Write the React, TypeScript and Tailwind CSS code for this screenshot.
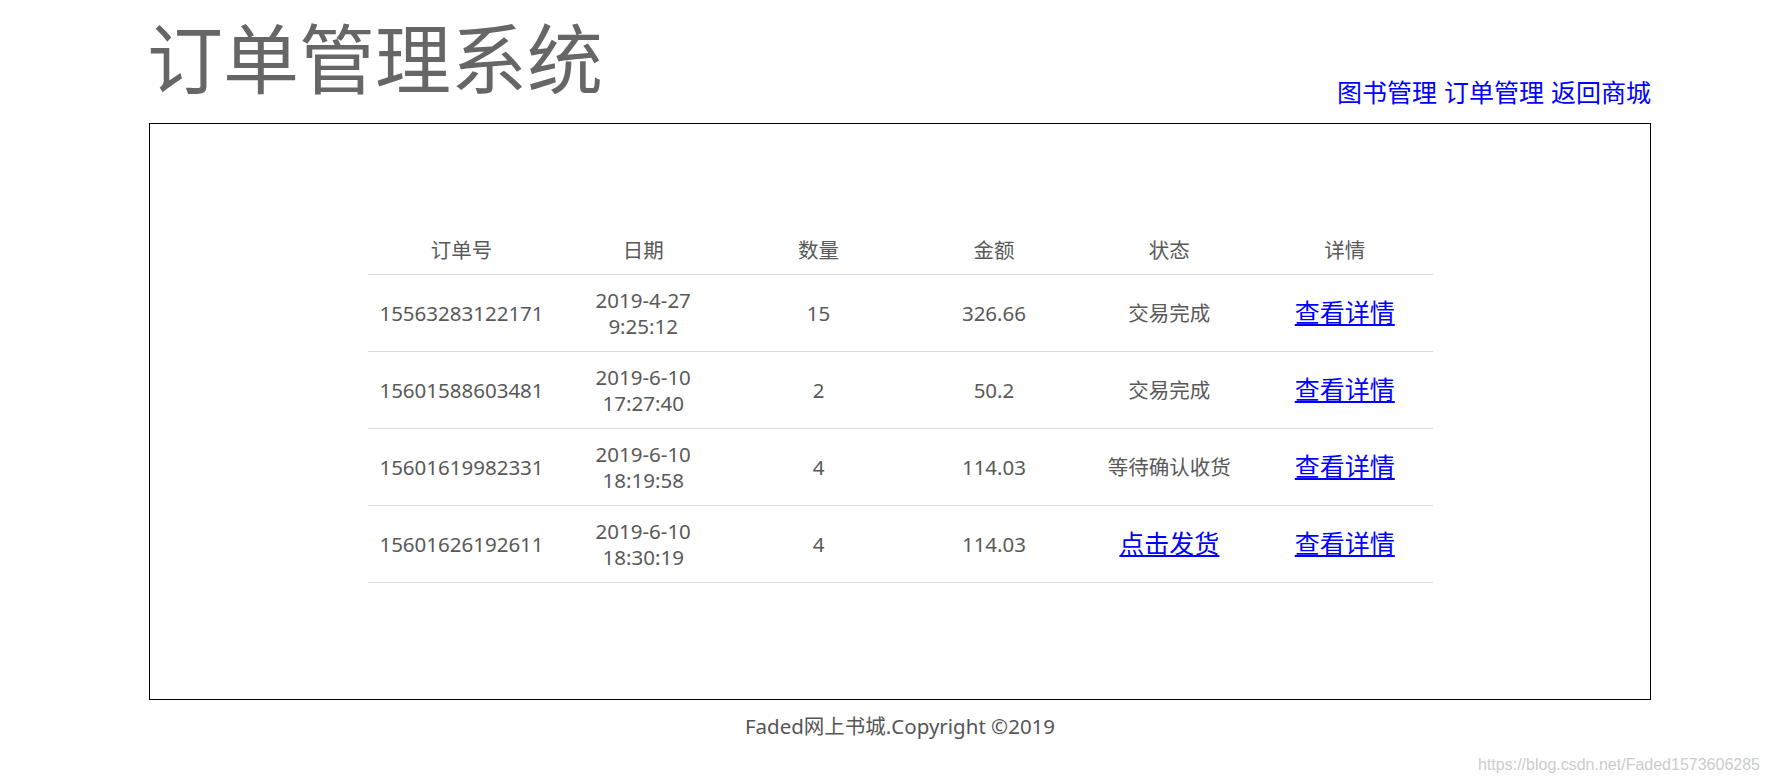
import React from "react";

const rows = [
  { id: "15563283122171", d: "2019-4-27", t: "9:25:12", n: "15", amt: "326.66", status: "交易完成", link: false },
  { id: "15601588603481", d: "2019-6-10", t: "17:27:40", n: "2", amt: "50.2", status: "交易完成", link: false },
  { id: "15601619982331", d: "2019-6-10", t: "18:19:58", n: "4", amt: "114.03", status: "等待确认收货", link: false },
  { id: "15601626192611", d: "2019-6-10", t: "18:30:19", n: "4", amt: "114.03", status: "点击发货", link: true },
];

const font = { fontFamily: '"Noto Sans", "Noto Sans CJK SC", sans-serif' };

export default function App() {
  return (
    <div className="relative w-[1769px] h-[781px] bg-white overflow-hidden" style={font}>
      <div className="ml-[149px] w-[1502px]">
        <header className="flex h-[123px] items-end justify-between">
          <h1 className="-ml-[2px] pb-[26px] text-[76px] font-normal leading-none text-[#666]">订单管理系统</h1>
          <nav className="flex gap-[7px] pb-[18px] text-[25px] leading-none text-[#0000ff]">
            <a href="#">图书管理</a>
            <a href="#">订单管理</a>
            <a href="#">返回商城</a>
          </nav>
        </header>
        <div className="flex h-[577px] justify-center border border-black">
          <table className="mt-[108px] h-fit w-[1065px] table-fixed border-collapse text-[20.5px] leading-[26px] text-[#595959]">
            <colgroup>
              <col className="w-[188px]" />
              <col />
              <col />
              <col />
              <col />
              <col />
            </colgroup>
            <thead>
              <tr>
                {["订单号", "日期", "数量", "金额", "状态", "详情"].map((h) => (
                  <th key={h} className="border-b border-[#dddddd] pt-[5px] pb-[11px] text-center font-normal">
                    {h}
                  </th>
                ))}
              </tr>
            </thead>
            <tbody>
              {rows.map((r) => (
                <tr key={r.id}>
                  <td className="border-b border-[#dddddd] pt-[12px] pb-[12px] text-center align-middle">{r.id}</td>
                  <td className="border-b border-[#dddddd] pt-[12px] pb-[12px] text-center align-middle">
                    <div>{r.d}</div>
                    <div>{r.t}</div>
                  </td>
                  <td className="border-b border-[#dddddd] pt-[12px] pb-[12px] text-center align-middle">{r.n}</td>
                  <td className="border-b border-[#dddddd] pt-[12px] pb-[12px] text-center align-middle">{r.amt}</td>
                  <td className="border-b border-[#dddddd] pt-[12px] pb-[12px] text-center align-middle">
                    {r.link ? (
                      <a href="#" className="text-[25px] text-[#0000ff] underline">
                        {r.status}
                      </a>
                    ) : (
                      <span>{r.status}</span>
                    )}
                  </td>
                  <td className="border-b border-[#dddddd] pt-[12px] pb-[12px] text-center align-middle">
                    <a href="#" className="text-[25px] text-[#0000ff] underline">
                      查看详情
                    </a>
                  </td>
                </tr>
              ))}
            </tbody>
          </table>
        </div>
        <footer className="mt-[13px] text-center text-[20.5px] leading-[26px] text-[#555]">
          Faded网上书城.Copyright ©2019
        </footer>
      </div>
      <div
        className="absolute bottom-[8px] right-[9px] text-[16px] leading-none text-[#cccccc]"
        style={{ fontFamily: '"Liberation Sans Narrow", "Liberation Sans", sans-serif' }}
      >
        https://blog.csdn.net/Faded1573606285
      </div>
    </div>
  );
}
